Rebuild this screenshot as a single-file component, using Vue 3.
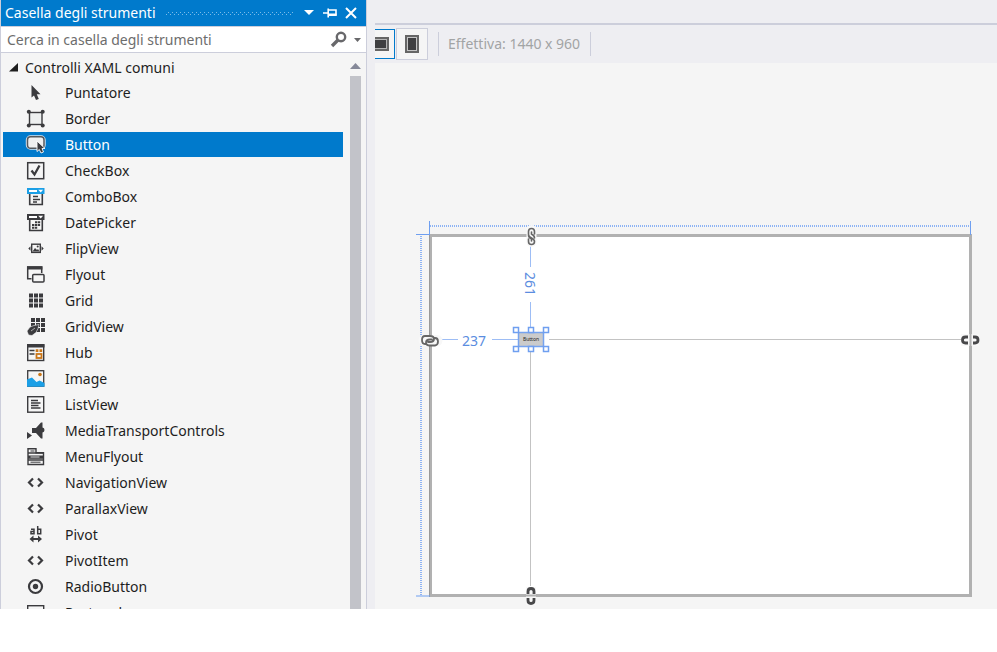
<script setup>
import { ref } from 'vue'

const ink = '#3b3b3e'
const chevrons = `<path d="M6 4.500 2 8.500l4 4M11 4.500l4 4-4 4" fill="none" stroke="${ink}" stroke-width="2.200"/>`

const items = [
  { name: 'Puntatore', icon: `<path d="M4.500 1v12.500l2.500-2 2 4.500 2.800-1-2-4.800H13.500z" fill="${ink}"/>` },
  { name: 'Border', icon: `<rect x="2.500" y="2.500" width="12.500" height="12" stroke="${ink}" stroke-width="1.400" fill="#eef0f0"/><g fill="${ink}"><circle cx="1.800" cy="1.800" r="2"/><circle cx="15.700" cy="1.800" r="2"/><circle cx="1.800" cy="15.500" r="2"/><circle cx="15.700" cy="15.500" r="2"/></g>` },
  { name: 'Button', icon: `<rect x="0" y="0.500" width="17.500" height="12" rx="3.500" fill="#fff" stroke="#d8e6f2" stroke-width="2.400"/><rect x="0.500" y="0.800" width="16.500" height="11.500" rx="3" fill="#f0f0f0" stroke="#55585c" stroke-width="1.500"/><path d="M10 5v10.500l2.300-2 1.700 3.500 2.500-1-1.500-3.500h3z" fill="${ink}" stroke="#fff" stroke-width="0.900"/>` },
  { name: 'CheckBox', icon: `<rect x="0.700" y="0.700" width="16" height="16" fill="#f5f5f5" stroke="${ink}" stroke-width="1.500"/><path d="m4.500 8.500 3 4 5-9" fill="none" stroke="${ink}" stroke-width="2.300"/>` },
  { name: 'ComboBox', icon: `<path d="M0 0h17.500v6H0z" fill="#1b9fe6"/><path d="M2 2h8v2H2zM11.300 1.800h4.800l-2.400 2.800z" fill="#fff"/><path d="M2.700 6v10.500h12.600V6" fill="#f5f5f5" stroke="${ink}" stroke-width="1.600"/><path d="M6 8.500h5M6 11.500h7M6 14h4" stroke="${ink}" stroke-width="1.300"/>` },
  { name: 'DatePicker', icon: `<path d="M0 0h17.500v6H0z" fill="${ink}"/><path d="M2 2h8v2H2zM11.300 1.800h4.800l-2.400 2.800z" fill="#fff"/><path d="M2.700 6v10.500h12.600V6" fill="#f5f5f5" stroke="${ink}" stroke-width="1.600"/><path d="M8 8.300h5.500M5 11h8.500M5 13.700h5.500" stroke="${ink}" stroke-width="2" stroke-dasharray="2.300 .6"/>` },
  { name: 'FlipView', icon: `<rect x="4.700" y="4.200" width="8.600" height="8.200" fill="#f5f5f5" stroke="${ink}" stroke-width="1.400"/><path d="m5.500 11.500 2.500-3.500 2 2 1-1 1.500 2.500z" fill="${ink}"/><circle cx="10.700" cy="6.500" r="1" fill="${ink}"/><path d="M3.500 6.300v4.500L1.300 8.500zM14.500 6.300v4.500l2.200-2.300z" fill="${ink}"/>` },
  { name: 'Flyout', icon: `<path d="M4.500 12.700H.7V1h14v6" fill="none" stroke="${ink}" stroke-width="1.500"/><path d="M0 .3h15.400v3.200H0z" fill="${ink}"/><rect x="5.700" y="8.500" width="11.300" height="7.500" rx="1" fill="#f5f5f5" stroke="${ink}" stroke-width="1.500"/>` },
  { name: 'Grid', icon: `<path d="M2 3.500h14M2 8.500h14M2 13.500h14" stroke="${ink}" stroke-width="4" stroke-dasharray="4 1"/>` },
  { name: 'GridView', icon: `<path d="M4 2h14M4 7h14M9 12h9" stroke="${ink}" stroke-width="4" stroke-dasharray="4 1"/><path d="m0 13 3-4 4-1.500 5-1-1 4-2 4-4 3-3.500-.5z" fill="${ink}" stroke="#f5f5f5" stroke-width=".6"/><path d="m4 13 4-3" stroke="#aaa"/>` },
  { name: 'Hub', icon: `<rect x="0.700" y="1" width="16" height="15.500" fill="#f5f5f5" stroke="${ink}" stroke-width="1.400"/><path d="M0 0h17.500v3.500H0z" fill="${ink}"/><path d="M2.500 6.500h5M2.500 10h5" stroke="${ink}" stroke-width="1.600"/><path d="M8.700 5.300h2.700V8H8.700zM12.500 5.300h2.700V8h-2.700z" fill="#ca7617"/><rect x="9.500" y="10" width="5" height="4" fill="none" stroke="#ca7617" stroke-width="1.800"/>` },
  { name: 'Image', icon: `<rect x="0.700" y="0.700" width="16" height="15.500" fill="#f5f5f5" stroke="${ink}" stroke-width="1.300"/><path d="M0 9.500 5 7.500l4.500 4.500 3-1.500 5 2.500v3.800H0z" fill="#1b9fe6"/><circle cx="13" cy="4.500" r="1.800" fill="#ca7617"/>` },
  { name: 'ListView', icon: `<rect x="0.700" y="0.700" width="16" height="15.500" fill="#f5f5f5" stroke="${ink}" stroke-width="1.400"/><path d="M4 4.500h7M4 7h9.500M4 9.500h7.500M4 12h9.500" stroke="${ink}" stroke-width="1.400"/>` },
  { name: 'MediaTransportControls', icon: `<path d="M5 6h4l5-5.500h1.500v5q2 .3 2 2.500t-2 2.500v6H14L9 11H5z" fill="${ink}"/><path d="m0 10 5 3.500L0 17z" fill="${ink}"/>` },
  { name: 'MenuFlyout', icon: `<path d="M1 16.500V.8h8v4h7.500v11.700z" fill="#f5f5f5" stroke="${ink}" stroke-width="1.400"/><path d="M1 5h15M1 12h16" stroke="${ink}" stroke-width="1.400"/><path d="M1 7.500h15v3.300H1z" fill="${ink}"/><path d="M3.500 3h4M3.500 14.200h10" stroke="${ink}"/><path d="M3.500 9h9" stroke="#ddd"/>` },
  { name: 'NavigationView', icon: chevrons },
  { name: 'ParallaxView', icon: chevrons },
  { name: 'Pivot', icon: `<g fill="none" stroke="${ink}" stroke-width="1.500"><path d="M4 3.200h3v4.600H4V5.500h3M10.700 0v7.800h3V3.200h-3"/></g><path d="M2.500 13l4-3.500V12h4.500V9.500l4 3.500-4 3.500V14H6.500v2.500z" fill="${ink}"/>` },
  { name: 'PivotItem', icon: chevrons },
  { name: 'RadioButton', icon: `<circle cx="8.500" cy="8.500" r="6.500" fill="#f5f5f5" stroke="${ink}" stroke-width="2.200"/><circle cx="8.500" cy="8.500" r="2.700" fill="${ink}"/>` },
  { name: 'Rectangle', icon: `<rect x="0.700" y="1.700" width="16" height="13" fill="#f5f5f5" stroke="${ink}" stroke-width="1.400"/>` },
]

const selected = ref('Button')
const expanded = ref(true)
const query = ref('')
const handles = [[513, 327], [528, 327], [543, 327], [513, 346], [528, 346], [543, 346]]
</script>

<template>
  <div class="ide">
    <aside class="toolbox">
      <header class="title-bar">
        <h1>Casella degli strumenti</h1>
        <svg class="grip" height="7" aria-hidden="true">
          <defs>
            <pattern id="grip" width="4" height="4" patternUnits="userSpaceOnUse">
              <path d="M0 0h1v1H0zM2 2h1v1H2z" fill="#7bbbe8" />
            </pattern>
          </defs>
          <rect width="100%" height="5" y="1" fill="url(#grip)" />
        </svg>
        <button aria-label="Opzioni finestra"><svg width="16" height="16"><path d="M3 5h10l-5 5z" fill="#fff" /></svg></button>
        <button aria-label="Blocca"><svg width="16" height="16"><path d="M1 8h5M6.200 3.500v9M6 5h8v5H6" stroke="#fff" fill="none" stroke-width="1.600" /><path d="M6 8.500h8.500V11H6z" fill="#fff" /></svg></button>
        <button aria-label="Chiudi"><svg width="16" height="16"><path d="m3 3 10 10M13 3 3 13" stroke="#fff" stroke-width="2" /></svg></button>
      </header>
      <div class="search">
        <input v-model="query" type="text" aria-label="Cerca" placeholder="Cerca in casella degli strumenti">
        <button aria-label="Avvia ricerca"><svg width="18" height="18"><circle cx="11" cy="6" r="4.200" fill="none" stroke="#68686b" stroke-width="2.400" /><path d="m8 9-6 6" stroke="#68686b" stroke-width="3.400" /></svg></button>
        <button aria-label="Opzioni ricerca"><svg width="9" height="18"><path d="M1 7h7l-3.500 4z" fill="#68686b" /></svg></button>
      </div>
      <div class="body">
        <div class="tree">
          <button class="category" :aria-expanded="expanded" @click="expanded = !expanded">
            <svg width="9" height="9"><path d="M9 0v8.500H0z" fill="#1e1e1e" /></svg>
            Controlli XAML comuni
          </button>
          <ul v-show="expanded">
            <li v-for="item in items" :key="item.name">
              <button class="item" :class="{ selected: item.name === selected }" @click="selected = item.name">
                <svg width="18" height="18" aria-hidden="true" v-html="item.icon" />
                <span>{{ item.name }}</span>
              </button>
            </li>
          </ul>
        </div>
        <div class="scrollbar">
          <svg width="11" height="6"><path d="M5.500 0 11 6H0z" fill="#868999" /></svg>
          <div class="thumb"></div>
        </div>
      </div>
    </aside>

    <main class="designer">
      <div class="tab-strip"></div>
      <div class="toolbar">
        <button class="orient landscape active" aria-label="Orizzontale">
          <svg width="15" height="14"><path d="M0 0h14v14H0z" fill="#666" /><path d="M0 2h12v10H0z" fill="#b5b5b5" /><path d="M0 3h11v8H0z" fill="#3f3f41" /></svg>
        </button>
        <button class="orient" aria-label="Verticale">
          <svg width="14" height="18"><path d="M0 0h14v18H0z" fill="#666" /><path d="M2 2h10v14H2z" fill="#c5c5c5" /><path d="M3 3h8v12H3z" fill="#3f3f41" /></svg>
        </button>
        <span class="size">Effettiva: 1440 x 960</span>
      </div>
      <div class="surface">
        <svg class="adorners" width="622" height="546" viewBox="375 63 622 546">
          <rect x="430.500" y="235.500" width="540" height="360" fill="#fff" stroke="#b1b1b1" stroke-width="3" />
          <path d="M429.500 234v363" stroke="#999" />
          <g stroke="#c3c3c3">
            <path d="M549 339.500h412M530.500 352v234" />
          </g>
          <g stroke="#6f9ff0" fill="none">
            <path d="M430 225.500h540M430 226.500h540M420.500 236v360M421.500 236v360" stroke-dasharray="1 1" stroke="#8db3f4" />
            <path d="M429.500 221v14M970.500 221v14M416 234.500h14M416 596h14" />
            <path d="M439 339.500h19M492 339.500h26M530.500 246v21M530.500 302v29" stroke="#9dbdf5" />
          </g>
          <g class="measure">
            <text x="462" y="346">237</text>
            <text transform="translate(525 272) rotate(90)">261</text>
          </g>
          <g fill="none" stroke-linecap="round">
            <path d="M531.500 230v12" stroke="#f8f8f8" stroke-width="10" />
            <path d="M534.500 234v-2.500q0-3-3-3t-3 3v3q0 2 3 3.500t3 3.500q0 3-3 3t-3-3V239M531.500 232v2q3 1.500 3 4M531.500 241v-2q-3-1.500-3-4" stroke="#666" stroke-width="1.600" />
            <path d="M424 340.500h13" stroke="#f8f8f8" stroke-width="11" />
            <path d="M426 344h-1q-3 0-3-4t3-4h5q4 0 4 3t-4 3h-2M434 338h1q3 0 3 3.500t-3 4h-5q-4 0-4-3t4-3h2" stroke="#666" stroke-width="1.800" />
          </g>
          <path d="M961 334h18v12h-18z" fill="#f8f8f8" opacity=".9" />
          <path d="M970.500 334v12" stroke="#b1b1b1" stroke-width="2" />
          <path d="M968 337h-2.500q-3 0-3 3t3 3h2.500M973 337h2q3 0 3 3t-3 3h-2" fill="none" stroke="#48484a" stroke-width="2.800" />
          <path d="M526 587h10v18h-10z" fill="#f8f8f8" />
          <path d="M525 595.500h12" stroke="#b1b1b1" stroke-width="2" />
          <path d="M528 594v-2.500q0-3 3-3t3 3v2.500M528 598v2.500q0 3 3 3t3-3V598" fill="none" stroke="#48484a" stroke-width="2.800" />
        </svg>
        <button class="placed">Button</button>
        <svg class="selection" width="622" height="546" viewBox="375 63 622 546">
          <rect x="518.500" y="332.500" width="25" height="14" fill="none" stroke="#76a3ef" stroke-width="1.500" />
          <rect v-for="([x, y], i) in handles" :key="i" :x="x + 0.500" :y="y + 0.500" width="5" height="5" fill="#fff" stroke="#6f9ff0" stroke-width="1.500" />
        </svg>
      </div>
    </main>
  </div>
</template>

<style>
body { margin: 0; background: #fff; }
</style>

<style scoped>
* { box-sizing: border-box; }
button, input {
  font: inherit;
  color: inherit;
  border: 0;
  margin: 0;
  padding: 0;
  background: none;
}
svg { display: block; flex: none; }
.ide {
  display: grid;
  grid-template-columns: 367px minmax(0, 1fr);
  gap: 8px;
  height: calc(100vh - 43px);
  overflow: hidden;
  background: #eeeef2;
  color: #1e1e1e;
  font: 14px/20px "Noto Sans", "Open Sans", sans-serif;
}
.toolbox {
  display: flex;
  flex-direction: column;
  min-height: 0;
  border: solid #cccedb;
  border-width: 0 1px;
  background: #f5f5f5;
}
.title-bar {
  display: flex;
  align-items: center;
  flex: none;
  height: 26px;
  padding: 0 7px 0 4px;
  gap: 5px;
  background: #007acc;
  color: #fff;
}
.title-bar h1 { margin: 0 5px 0 0; font-size: 14px; font-weight: 400; }
.grip { flex: 1; min-width: 0; margin-right: 2px; }
.search {
  display: flex;
  align-items: center;
  flex: none;
  height: 27px;
  padding: 0 4px 0 6px;
  gap: 5px;
  border: solid #cccedb;
  border-width: 1px 0;
  background: #fff;
}
.search input { flex: 1; min-width: 0; outline: 0; }
.search input::placeholder { color: #6d6d6d; opacity: 1; }
.body { display: flex; flex: 1; min-height: 0; padding: 2px 5px 0 2px; }
.tree { flex: 1; min-width: 0; overflow: hidden; margin-right: 7px; }
.category {
  display: flex;
  align-items: center;
  gap: 7px;
  width: 100%;
  height: 25px;
  padding-left: 6px;
}
ul { display: grid; gap: 1px; margin: 0; padding: 0; list-style: none; }
.item {
  display: flex;
  align-items: center;
  gap: 20px;
  width: 100%;
  height: 25px;
  padding-left: 24px;
  text-align: left;
}
.item svg { margin-top: 1px; overflow: visible; }
.item.selected { background: #007acc; color: #fff; }
.scrollbar {
  display: flex;
  flex-direction: column;
  gap: 7px;
  width: 11px;
  padding-top: 8px;
}
.thumb { flex: 1; background: #c2c3c9; }
.designer { display: flex; flex-direction: column; min-width: 0; min-height: 0; }
.tab-strip { flex: none; height: 25px; border-bottom: 2px solid #cccedb; }
.toolbar {
  display: flex;
  align-items: center;
  flex: none;
  height: 38px;
  color: #a2a4a5;
}
.orient {
  display: flex;
  align-items: center;
  justify-content: center;
  width: 32px;
  height: 32px;
  border: 1px solid #cccedb;
  background: #f5f5f5;
}
.landscape { justify-content: flex-start; width: 20px; height: 30px; margin-right: 1px; border-left: 0; }
.orient.active { border-color: #007acc; }
.size {
  margin-left: 10px;
  padding: 2px 10px 2px 9px;
  border: solid #cccedb;
  border-width: 0 1px;
}
.surface { position: relative; flex: 1; min-height: 0; overflow: hidden; background: #f5f5f5; }
.selection { position: absolute; left: 0; top: 0; pointer-events: none; }
.measure { fill: #5b8de0; font-size: 14px; }
.placed {
  position: absolute;
  left: 143px;
  top: 269px;
  width: 26px;
  height: 15px;
  background: #cbcbcb;
  color: #222;
  font-size: 5px;
  line-height: 15px;
}
</style>
